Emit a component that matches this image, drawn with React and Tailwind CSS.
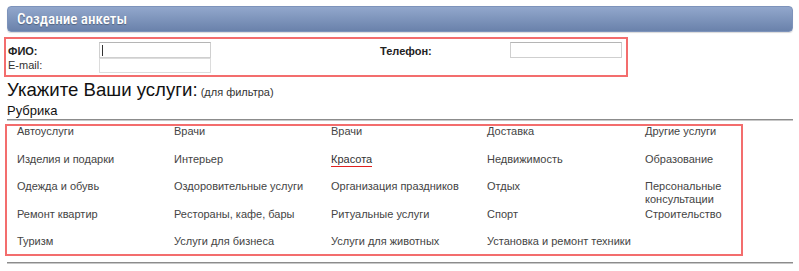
import React from "react";

const items = [
  "Автоуслуги", "Врачи", "Врачи", "Доставка", "Другие услуги",
  "Изделия и подарки", "Интерьер", "Красота", "Недвижимость", "Образование",
  "Одежда и обувь", "Оздоровительные услуги", "Организация праздников", "Отдых", "Персональные консультации",
  "Ремонт квартир", "Рестораны, кафе, бары", "Ритуальные услуги", "Спорт", "Строительство",
  "Туризм", "Услуги для бизнеса", "Услуги для животных", "Установка и ремонт техники", "",
];

export default function App() {
  return (
    <div className="w-[799px] h-[271px] bg-white overflow-hidden font-['Liberation_Sans',Arial,sans-serif] text-[#222]">
      <div className="pt-[6px] px-[7px] pr-[6px]">
        <div className="h-[26px] rounded-[4px] bg-gradient-to-b from-[#92a7cc] to-[#6a82ab] border border-[#7d93bb] flex items-center pl-[9px] shadow-[0_1px_1px_rgba(0,0,0,0.15)]">
          <span className="text-white text-[15px] font-medium font-['Roboto_Condensed','Open_Sans',sans-serif] [font-stretch:condensed] [text-shadow:0_1px_1px_rgba(0,0,0,0.3)]">Создание анкеты</span>
        </div>
      </div>

      <div className="mt-[5px] ml-[4px] w-[624px] h-[40px] border-2 border-[#f36d6d] relative text-[11px]">
        <div className="flex items-start pt-[3px] pl-[2px]">
          <div className="w-[91px] flex flex-col">
            <span className="font-bold h-[16px] leading-[16px] pt-[1px] text-[#222]">ФИО:</span>
            <span className="h-[15px] leading-[14px] text-[#333]">E-mail:</span>
          </div>
          <div className="flex flex-col">
            <div className="w-[112px] h-[16px] border border-[#cfcfcf] border-t-[#b5b5b5] bg-white relative">
              <div className="absolute left-[2px] top-[2px] w-[1px] h-[11px] bg-[#333]" />
            </div>
            <div className="w-[112px] h-[15px] border border-[#dcdcdc] bg-white" />
          </div>
          <div className="ml-[169px] w-[130px] font-bold h-[16px] leading-[16px] pt-[1px]">Телефон:</div>
          <div className="w-[112px] h-[16px] border border-[#cfcfcf] border-t-[#b5b5b5] bg-white" />
        </div>
      </div>

      <div className="pl-[7px] mt-[2px] leading-[22px]">
        <span className="text-[18.6px] text-[#111]">Укажите Ваши услуги:</span>
        <span className="text-[11px] text-[#333]"> (для фильтра)</span>
      </div>
      <div className="pl-[7px] text-[13px] leading-[15px] text-[#111]">Рубрика</div>
      <div className="ml-[7px] mr-[6px] h-[2px] bg-[#8c8c8c] mt-[1px] border-b border-[#c8c8c8]" />

      <div className="mt-[3px] ml-[5px] w-[738px] h-[132px] border-2 border-[#f36d6d] pl-[10px]">
        <div className="grid grid-cols-[157px_157px_156px_158px_90px] auto-rows-[27.5px] -mt-[1px] text-[11px] leading-[13px] text-[#444]">
          {items.map((t, i) => (
            <div key={i} className="h-[27.5px] overflow-visible">
              {t === "Красота" ? (
                <span className="border-b border-[#e02020] pb-[1px] text-[#333]">{t}</span>
              ) : (
                <span>{t}</span>
              )}
            </div>
          ))}
        </div>
      </div>

      <div className="mt-[6px] ml-[7px] mr-[6px] h-[2px] bg-[#8c8c8c] border-b border-[#c8c8c8]" />
    </div>
  );
}
